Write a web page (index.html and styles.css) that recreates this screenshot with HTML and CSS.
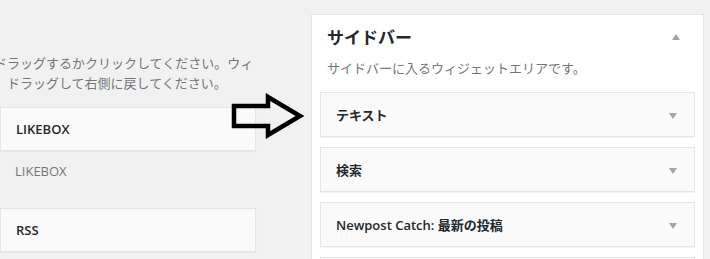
FILE: index.html
```html
<!DOCTYPE html>
<html lang="ja">
<head>
  <meta charset="UTF-8" />
  <title>ウィジェット</title>
  <link rel="stylesheet" href="styles.css">
</head>
<body>
<div class="widgets-page">
  <div class="available">
    <p class="description">ウィジェットを有効化するにはサイドバーにドラッグするかクリックしてください。ウィジェットを無効化し設定を削除したい場合は、ドラッグして右側に戻してください。</p>
    <div class="widget-list">
      <div class="widget-item">
        <div class="widget-top">Akismet Widget</div>
        <div class="widget-description">スパム数を表示</div>
      </div>
      <div class="widget-item">
        <div class="widget-top">LIKEBOX</div>
        <div class="widget-description">LIKEBOX</div>
      </div>
      <div class="widget-item">
        <div class="widget-top">Newpost Catch</div>
        <div class="widget-description">サムネイル付き新着記事</div>
      </div>
      <div class="widget-item">
        <div class="widget-top">RSS</div>
        <div class="widget-description">RSS または Atom フィードのエントリー。</div>
      </div>
    </div>
  </div>

  <div class="sidebar">
    <div class="sidebar-name">
      <h2>サイドバー</h2>
      <span class="toggle up"></span>
    </div>
    <p class="sidebar-description">サイドバーに入るウィジェットエリアです。</p>
    <div class="sidebar-widget">
      <h3>テキスト</h3>
      <span class="toggle down"></span>
    </div>
    <div class="sidebar-widget">
      <h3>検索</h3>
      <span class="toggle down"></span>
    </div>
    <div class="sidebar-widget">
      <h3>Newpost Catch: 最新の投稿</h3>
      <span class="toggle down"></span>
    </div>
    <div class="sidebar-widget">
      <h3>カテゴリー</h3>
      <span class="toggle down"></span>
    </div>
  </div>

  <svg class="drag-arrow" width="80" height="50" viewBox="0 0 80 50">
    <polygon points="6,14 40,14 40,5 72,24 40,43 40,34 6,34" fill="none" stroke="#000" stroke-width="4.5" stroke-linejoin="miter" />
  </svg>
</div>
</body>
</html>
```

FILE: styles.css
```css
body {
  margin: 0;
  background: #f1f1f1;
  color: #23282d;
  font-family: 'Open Sans', 'Noto Sans CJK JP', sans-serif;
  font-size: 13px;
  overflow: hidden;
}
.widgets-page {
  position: relative;
  display: flex;
  align-items: flex-start;
  height: 259px;
}
.available {
  flex: none;
  width: 522px;
  margin-left: -266px;
}
.description {
  margin: 54px 0 14px;
  line-height: 19.5px;
  color: #72777c;
}
.widget-list {
  display: grid;
  grid-template-columns: repeat(2, minmax(0, 1fr));
  column-gap: 10px;
}
.widget-item {
  margin-bottom: 27px;
}
.widget-top {
  height: 42px;
  line-height: 42px;
  padding: 0 15px;
  background: #fafafa;
  border: 1px solid #e5e5e5;
  box-shadow: 0 1px 1px rgba(0,0,0,0.04);
  font-weight: 600;
  white-space: nowrap;
  overflow: hidden;
}
.widget-description {
  padding: 11px 15px 0;
  line-height: 19px;
  color: #72777c;
  white-space: nowrap;
  overflow: hidden;
}
.sidebar {
  flex: none;
  box-sizing: border-box;
  width: 393px;
  height: 260px;
  margin: 14px 0 0 55px;
  padding: 0 8px;
  background: #fff;
  border: 1px solid #e5e5e5;
}
.sidebar-name {
  display: flex;
  align-items: center;
  justify-content: space-between;
  padding: 11px 7px 0;
}
.sidebar-name h2 {
  margin: 0;
  font-size: 17px;
  line-height: 24px;
  font-weight: 700;
}
.sidebar-description {
  margin: 8px 7px 14px;
  line-height: 20px;
  color: #72777c;
}
.sidebar-widget {
  display: flex;
  align-items: center;
  justify-content: space-between;
  height: 43px;
  padding: 0 15px;
  margin-bottom: 10px;
  background: #fafafa;
  border: 1px solid #e5e5e5;
  box-shadow: 0 1px 1px rgba(0,0,0,0.04);
}
.sidebar-widget h3 {
  margin: 0;
  font-size: 13px;
  font-weight: 600;
}
.toggle {
  width: 0;
  height: 0;
  border-left: 4.5px solid transparent;
  border-right: 4.5px solid transparent;
}
.toggle.up {
  border-bottom: 6px solid #a0a5aa;
  margin: 0 8px 3px 0;
}
.toggle.down {
  border-top: 6px solid #a0a5aa;
  margin: 3px 2px 0 0;
}
.drag-arrow {
  position: absolute;
  left: 228px;
  top: 92px;
}
```
